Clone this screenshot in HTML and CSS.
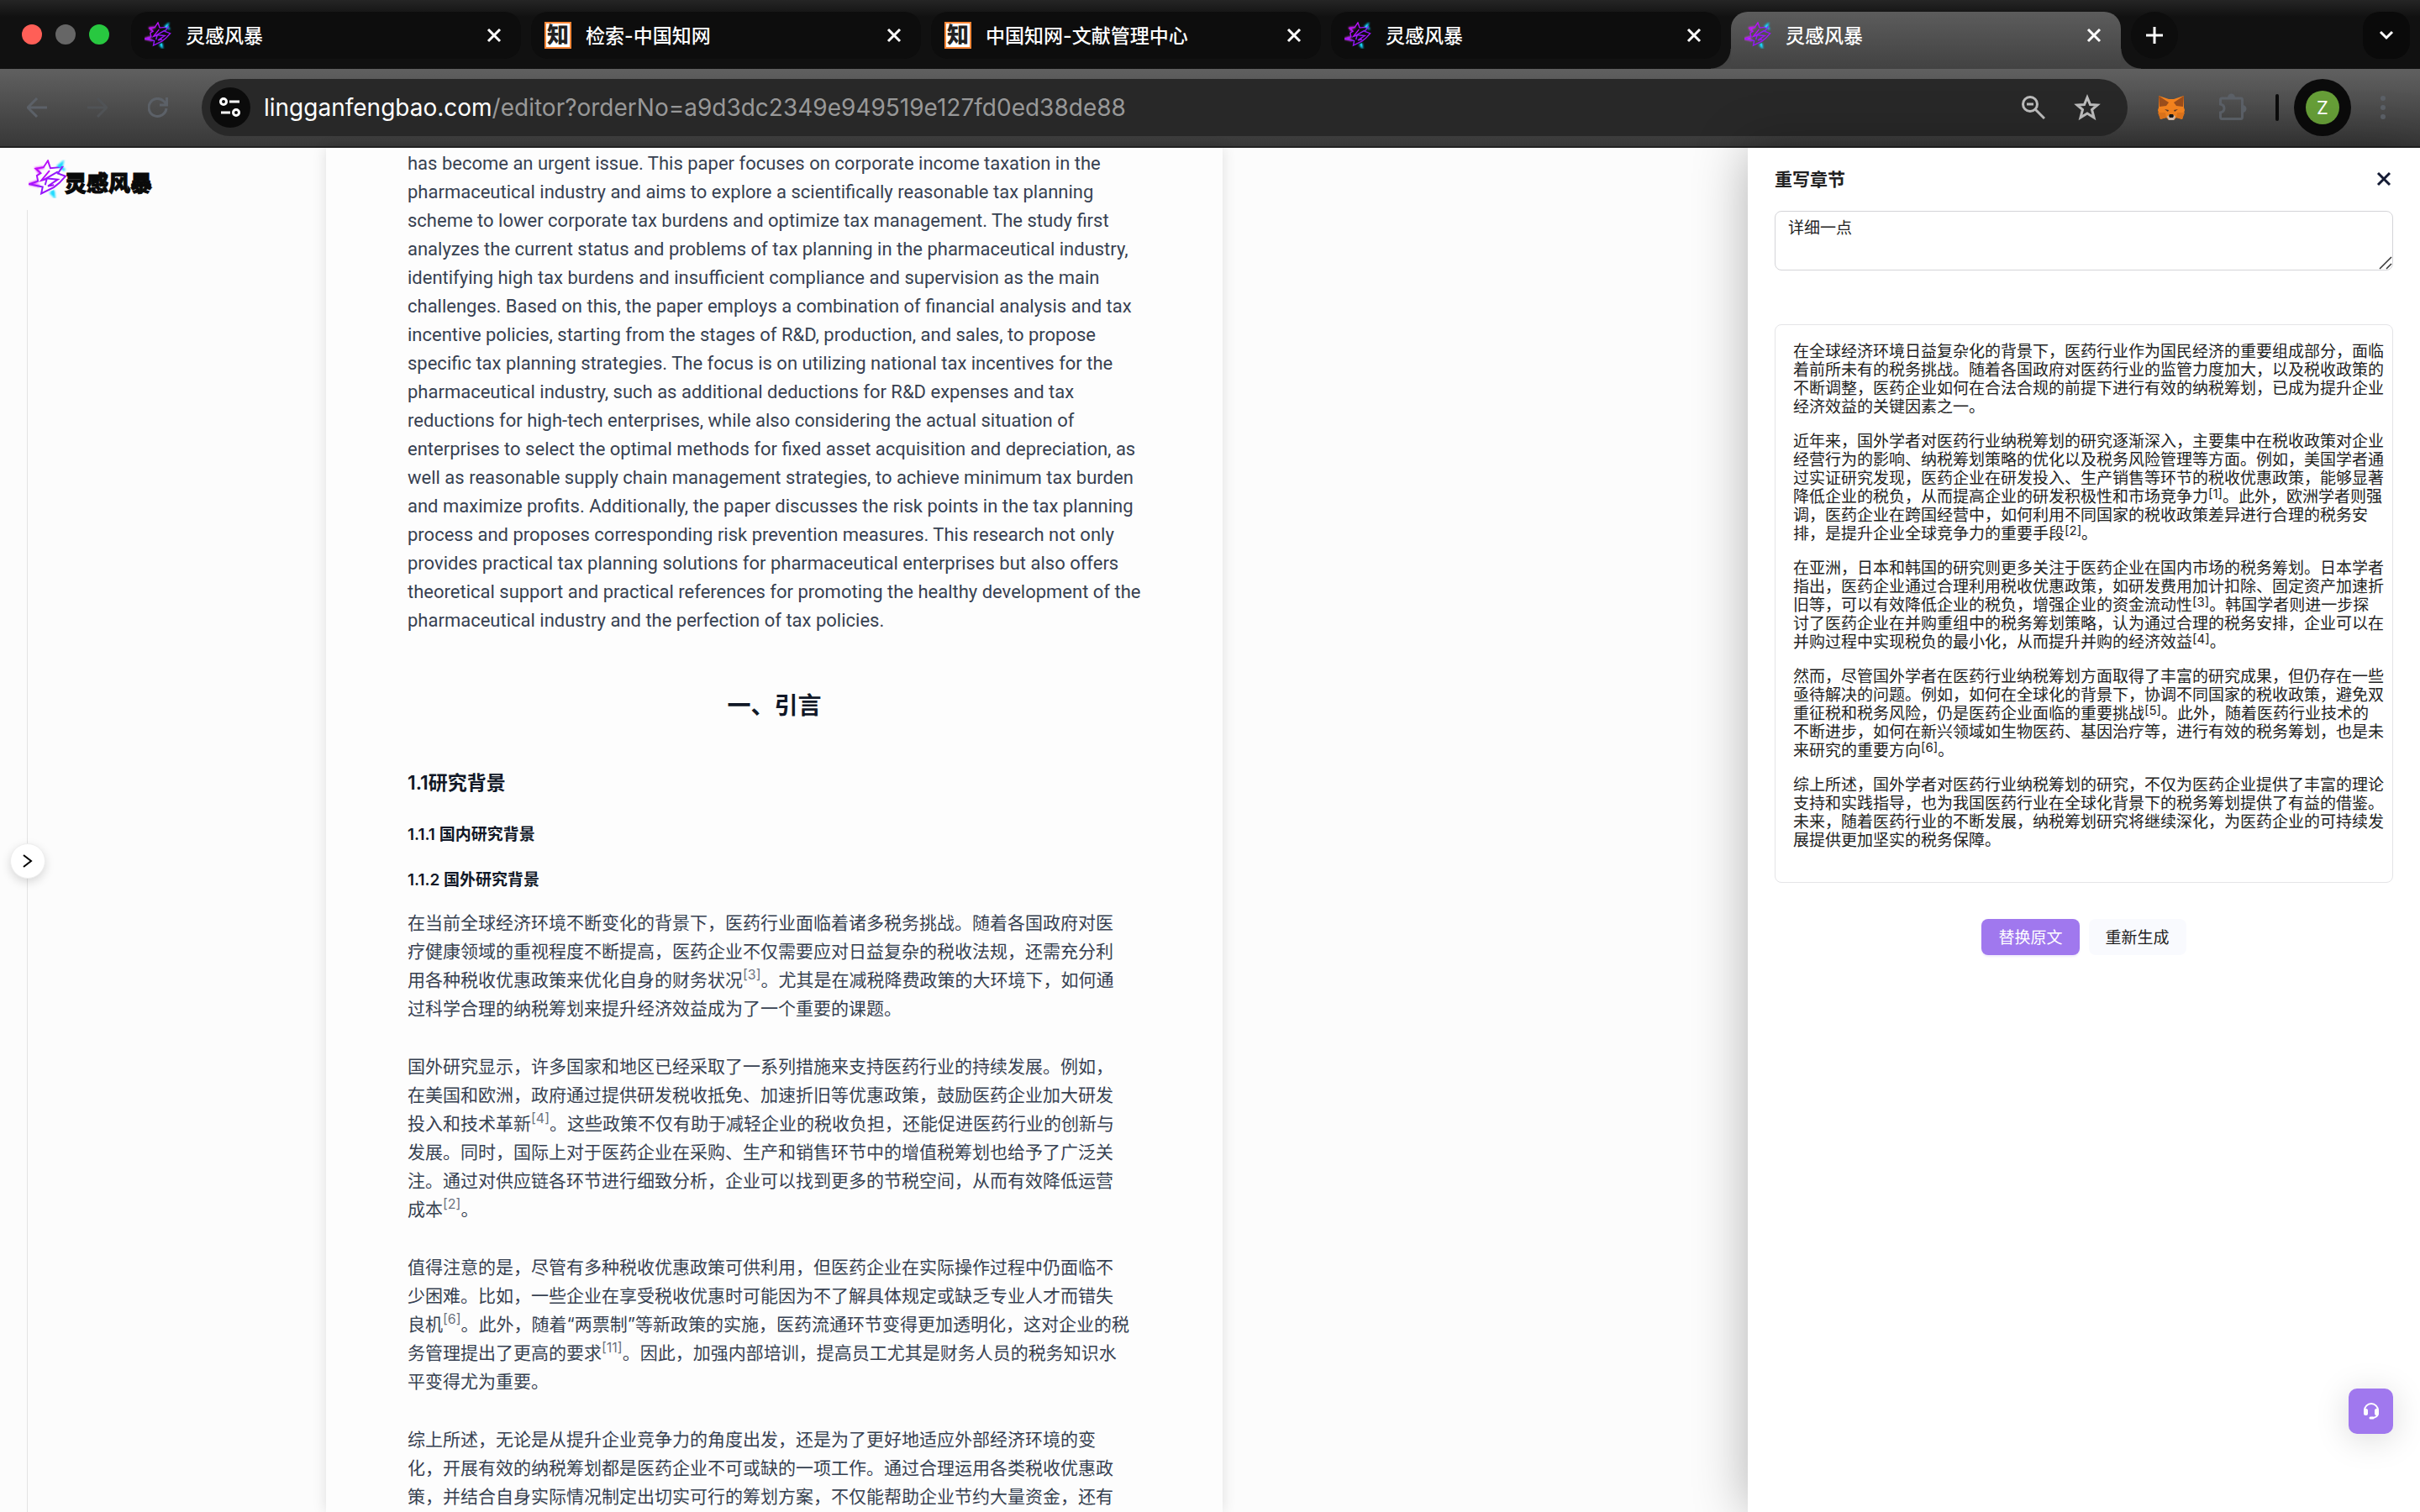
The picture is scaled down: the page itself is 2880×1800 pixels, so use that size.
FILE: index.html
```html
<!DOCTYPE html>
<html lang="zh-CN">
<head>
    <meta charset="UTF-8">
    <meta name="viewport" content="width=device-width, initial-scale=1.0">
    <title>灵感风暴</title>
    <link rel="stylesheet" href="styles.css">
</head>
<body>
    <!-- Shared icons -->
    <svg class="sprite" aria-hidden="true">
        <defs>
            <linearGradient id="neon" x1="0" y1="0" x2="1" y2="1">
                <stop offset="0" stop-color="#e800f5"/>
                <stop offset="0.55" stop-color="#8a1cff"/>
                <stop offset="1" stop-color="#b400f0"/>
            </linearGradient>
            <filter id="glow" x="-40%" y="-40%" width="180%" height="180%">
                <feGaussianBlur stdDeviation="4"/>
            </filter>
        </defs>
        <symbol id="star-logo" viewBox="0 0 140 140">
            <g filter="url(#glow)" fill="none" stroke-width="9">
                <path d="M104 26 L122 12 L118 30 L132 38 M78 118 L92 132 L90 112" stroke="#12dcff"/>
                <path d="M40 50 L28 32 L56 28 M34 78 L4 88 L40 96" stroke="#e23cff"/>
            </g>
            <g fill="none" stroke="url(#neon)" stroke-width="6" stroke-linejoin="miter">
                <path d="M26 33 L54 28 L70 4 L79 31 L122 27 L106 50 L134 60 L112 84 L92 100 L46 123 L51 99 L3 89 L34 78 L30 58 L44 49 Z"/>
                <path d="M76 40 L46 76 L66 70 L60 92 M106 44 L64 68 L106 72 L70 96 L92 92"/>
            </g>
            <path d="M104 26 L120 14 L117 31 Z M80 116 L92 130 L92 110 Z" fill="#20d8ff" opacity="0.8"/>
        </symbol>
        <symbol id="close" viewBox="0 0 18 18">
            <path d="M2 2 L16 16 M16 2 L2 16" fill="none" stroke="currentColor" stroke-width="3"/>
        </symbol>
    </svg>

    <header class="browser">
        <div class="tab-strip">
            <div class="window-dots">
                <span class="dot dot-red"></span>
                <span class="dot dot-gray"></span>
                <span class="dot dot-green"></span>
            </div>
            <div class="tabs">
                <div class="tab">
                    <svg class="favicon"><use href="#star-logo"/></svg>
                    <span class="tab-title">灵感风暴</span>
                    <button class="tab-close" aria-label="关闭"><svg><use href="#close"/></svg></button>
                </div>
                <div class="tab">
                    <span class="favicon-cnki">知</span>
                    <span class="tab-title">检索-中国知网</span>
                    <button class="tab-close" aria-label="关闭"><svg><use href="#close"/></svg></button>
                </div>
                <div class="tab">
                    <span class="favicon-cnki">知</span>
                    <span class="tab-title">中国知网-文献管理中心</span>
                    <button class="tab-close" aria-label="关闭"><svg><use href="#close"/></svg></button>
                </div>
                <div class="tab">
                    <svg class="favicon"><use href="#star-logo"/></svg>
                    <span class="tab-title">灵感风暴</span>
                    <button class="tab-close" aria-label="关闭"><svg><use href="#close"/></svg></button>
                </div>
                <div class="tab tab-active">
                    <svg class="favicon"><use href="#star-logo"/></svg>
                    <span class="tab-title">灵感风暴</span>
                    <button class="tab-close" aria-label="关闭"><svg><use href="#close"/></svg></button>
                </div>
                <button class="tab-new" aria-label="新标签页">
                    <svg width="20" height="20" viewBox="0 0 20 20"><path d="M10 0 V20 M0 10 H20" stroke="#fff" stroke-width="3"/></svg>
                </button>
            </div>
            <button class="tab-search" aria-label="搜索标签页">
                <svg width="18" height="12" viewBox="0 0 18 12"><path d="M2 2 L9 9 L16 2" fill="none" stroke="#fff" stroke-width="3"/></svg>
            </button>
        </div>

        <div class="toolbar">
            <div class="nav-buttons">
                <button aria-label="后退">
                    <svg width="24" height="24" viewBox="0 0 24 24"><path d="M24 12 H2 M12 1 L1 12 L12 23" fill="none" stroke="#5c6168" stroke-width="3"/></svg>
                </button>
                <button aria-label="前进">
                    <svg width="24" height="24" viewBox="0 0 24 24"><path d="M0 12 H22 M12 1 L23 12 L12 23" fill="none" stroke="#505356" stroke-width="3"/></svg>
                </button>
                <button aria-label="刷新">
                    <svg width="24" height="24" viewBox="0 0 24 24"><path d="M22 13 A10.500 10.500 0 1 1 19 4.500 L22 8 M22.500 0 V9 H14" fill="none" stroke="#5c6168" stroke-width="3"/></svg>
                </button>
            </div>
            <div class="address-bar">
                <button class="site-info" aria-label="网站信息">
                    <svg width="26" height="24" viewBox="0 0 26 24" fill="none" stroke="#fff" stroke-width="3"><circle cx="5" cy="5" r="3.500"/><path d="M12 5 H24 M2 18 H13"/><circle cx="20" cy="18" r="3.500"/></svg>
                </button>
                <div class="url"><span class="url-host">lingganfengbao.com</span>/editor?orderNo=a9d3dc2349e949519e127fd0ed38de88</div>
                <button aria-label="缩放">
                    <svg width="28" height="28" viewBox="0 0 28 28" fill="none" stroke="#bdbdbd" stroke-width="3"><circle cx="10" cy="10" r="8.500"/><path d="M6 10 H14 M16 16 L27 27"/></svg>
                </button>
                <button aria-label="收藏">
                    <svg width="32" height="32" viewBox="0 0 32 32"><path d="M16 4 L19.500 12.500 L28 13 L21.500 18.500 L24 28 L16 23 L8 28 L10.500 18.500 L4 13 L12.500 12.500 Z" fill="none" stroke="#bdbdbd" stroke-width="3"/></svg>
                </button>
            </div>
            <div class="extensions">
                <button aria-label="MetaMask">
                    <svg width="32" height="32" viewBox="0 0 32 32">
                        <path d="M1 2 L13 6 H19 L31 2 V16 L32 19 L29 30 L22 28 L19 31 H13 L10 28 L3 30 L0 19 L1 16 Z" fill="#f5841f"/>
                        <path d="M1 2 L13 10 L10 14 L2 15 Z M31 2 L19 10 L22 14 L30 15 Z" fill="#9c4e1c"/>
                        <path d="M0 22 H9 L10 28 L3 30 Z M32 22 H23 L22 28 L29 30 Z" fill="#e2761b"/>
                        <path d="M8 18 L13 19 L12 21 Z M24 18 L19 19 L20 21 Z" fill="#5a3a2a"/>
                        <path d="M11 27 L13 25 H19 L21 27 L19 31 H13 Z" fill="#d7c1b3"/>
                        <path d="M13 26 L14 24 H18 L19 26 L18 28 H14 Z" fill="#161616"/>
                    </svg>
                </button>
                <button aria-label="扩展程序">
                    <svg width="34" height="34" viewBox="0 0 34 34">
                        <path d="M4 6 H27 Q28.500 6 28.500 8 V28 Q28.500 30.500 27 30.500 H4 Q2.500 30.500 2.500 28 V23 Q7 22 7 18 Q7 14 2.500 13 V8 Q2.500 6 4 6 Z" fill="none" stroke="#5c6168" stroke-width="3"/>
                        <path d="M11 5 A4.500 4.500 0 0 1 20 5 Z M29 14 A4.500 4.500 0 0 1 29 23 Z" fill="#5c6168"/>
                    </svg>
                </button>
                <span class="divider"></span>
                <button class="profile" aria-label="个人资料"><span class="avatar">Z</span></button>
                <button aria-label="更多">
                    <svg width="8" height="28" viewBox="0 0 8 28" fill="#5c6168"><circle cx="4" cy="3" r="3"/><circle cx="4" cy="14" r="3"/><circle cx="4" cy="25" r="3"/></svg>
                </button>
            </div>
        </div>
    </header>

    <div class="workspace">
        <aside class="side">
            <a class="logo" href="#">
                <svg class="logo-mark"><use href="#star-logo"/></svg>
                <span class="logo-text">灵感风暴</span>
            </a>
            <div class="rail">
                <button class="rail-toggle" aria-label="展开">
                    <svg width="12" height="18" viewBox="0 0 12 18"><path d="M1 2 L10 9 L1 16" fill="none" stroke="#000" stroke-width="2"/></svg>
                </button>
            </div>
        </aside>

        <main class="canvas">
            <article class="paper">
                <p class="abstract">has become an urgent issue. This paper focuses on corporate income taxation in the<br>
                pharmaceutical industry and aims to explore a scientifically reasonable tax planning<br>
                scheme to lower corporate tax burdens and optimize tax management. The study first<br>
                analyzes the current status and problems of tax planning in the pharmaceutical industry,<br>
                identifying high tax burdens and insufficient compliance and supervision as the main<br>
                challenges. Based on this, the paper employs a combination of financial analysis and tax<br>
                incentive policies, starting from the stages of R&amp;D, production, and sales, to propose<br>
                specific tax planning strategies. The focus is on utilizing national tax incentives for the<br>
                pharmaceutical industry, such as additional deductions for R&amp;D expenses and tax<br>
                reductions for high-tech enterprises, while also considering the actual situation of<br>
                enterprises to select the optimal methods for fixed asset acquisition and depreciation, as<br>
                well as reasonable supply chain management strategies, to achieve minimum tax burden<br>
                and maximize profits. Additionally, the paper discusses the risk points in the tax planning<br>
                process and proposes corresponding risk prevention measures. This research not only<br>
                provides practical tax planning solutions for pharmaceutical enterprises but also offers<br>
                theoretical support and practical references for promoting the healthy development of the<br>
                pharmaceutical industry and the perfection of tax policies.</p>

                <h1>一、引言</h1>
                <h2>1.1研究背景</h2>
                <h3>1.1.1 国内研究背景</h3>
                <h3>1.1.2 国外研究背景</h3>

                <p>在当前全球经济环境不断变化的背景下，医药行业面临着诸多税务挑战。随着各国政府对医<br>
                疗健康领域的重视程度不断提高，医药企业不仅需要应对日益复杂的税收法规，还需充分利<br>
                用各种税收优惠政策来优化自身的财务状况<sup>[3]</sup>。尤其是在减税降费政策的大环境下，如何通<br>
                过科学合理的纳税筹划来提升经济效益成为了一个重要的课题。</p>

                <p>国外研究显示，许多国家和地区已经采取了一系列措施来支持医药行业的持续发展。例如，<br>
                在美国和欧洲，政府通过提供研发税收抵免、加速折旧等优惠政策，鼓励医药企业加大研发<br>
                投入和技术革新<sup>[4]</sup>。这些政策不仅有助于减轻企业的税收负担，还能促进医药行业的创新与<br>
                发展。同时，国际上对于医药企业在采购、生产和销售环节中的增值税筹划也给予了广泛关<br>
                注。通过对供应链各环节进行细致分析，企业可以找到更多的节税空间，从而有效降低运营<br>
                成本<sup>[2]</sup>。</p>

                <p>值得注意的是，尽管有多种税收优惠政策可供利用，但医药企业在实际操作过程中仍面临不<br>
                少困难。比如，一些企业在享受税收优惠时可能因为不了解具体规定或缺乏专业人才而错失<br>
                良机<sup>[6]</sup>。此外，随着“两票制”等新政策的实施，医药流通环节变得更加透明化，这对企业的税<br>
                务管理提出了更高的要求<sup>[11]</sup>。因此，加强内部培训，提高员工尤其是财务人员的税务知识水<br>
                平变得尤为重要。</p>

                <p>综上所述，无论是从提升企业竞争力的角度出发，还是为了更好地适应外部经济环境的变<br>
                化，开展有效的纳税筹划都是医药企业不可或缺的一项工作。通过合理运用各类税收优惠政<br>
                策，并结合自身实际情况制定出切实可行的筹划方案，不仅能帮助企业节约大量资金，还有</p>
            </article>
        </main>

        <section class="drawer">
            <div class="drawer-header">
                <label class="drawer-title" for="prompt">重写章节</label>
                <button class="drawer-close" aria-label="关闭">
                    <svg width="18" height="18" viewBox="0 0 18 18"><path d="M2 2 L16 16 M16 2 L2 16" stroke="#141b34" stroke-width="3"/></svg>
                </button>
            </div>
            <div class="prompt-box">
                <textarea id="prompt" class="prompt">详细一点</textarea>
                <svg class="resizer" width="16" height="16" viewBox="0 0 16 16"><path d="M1 15 L15 1 M9 15 L15 9" stroke="#333" stroke-width="1.500"/></svg>
            </div>
            <div class="result">
                <p>在全球经济环境日益复杂化的背景下，医药行业作为国民经济的重要组成部分，面临<br>
                着前所未有的税务挑战。随着各国政府对医药行业的监管力度加大，以及税收政策的<br>
                不断调整，医药企业如何在合法合规的前提下进行有效的纳税筹划，已成为提升企业<br>
                经济效益的关键因素之一。</p>
                <p>近年来，国外学者对医药行业纳税筹划的研究逐渐深入，主要集中在税收政策对企业<br>
                经营行为的影响、纳税筹划策略的优化以及税务风险管理等方面。例如，美国学者通<br>
                过实证研究发现，医药企业在研发投入、生产销售等环节的税收优惠政策，能够显著<br>
                降低企业的税负，从而提高企业的研发积极性和市场竞争力<sup>[1]</sup>。此外，欧洲学者则强<br>
                调，医药企业在跨国经营中，如何利用不同国家的税收政策差异进行合理的税务安<br>
                排，是提升企业全球竞争力的重要手段<sup>[2]</sup>。</p>
                <p>在亚洲，日本和韩国的研究则更多关注于医药企业在国内市场的税务筹划。日本学者<br>
                指出，医药企业通过合理利用税收优惠政策，如研发费用加计扣除、固定资产加速折<br>
                旧等，可以有效降低企业的税负，增强企业的资金流动性<sup>[3]</sup>。韩国学者则进一步探<br>
                讨了医药企业在并购重组中的税务筹划策略，认为通过合理的税务安排，企业可以在<br>
                并购过程中实现税负的最小化，从而提升并购的经济效益<sup>[4]</sup>。</p>
                <p>然而，尽管国外学者在医药行业纳税筹划方面取得了丰富的研究成果，但仍存在一些<br>
                亟待解决的问题。例如，如何在全球化的背景下，协调不同国家的税收政策，避免双<br>
                重征税和税务风险，仍是医药企业面临的重要挑战<sup>[5]</sup>。此外，随着医药行业技术的<br>
                不断进步，如何在新兴领域如生物医药、基因治疗等，进行有效的税务筹划，也是未<br>
                来研究的重要方向<sup>[6]</sup>。</p>
                <p>综上所述，国外学者对医药行业纳税筹划的研究，不仅为医药企业提供了丰富的理论<br>
                支持和实践指导，也为我国医药行业在全球化背景下的税务筹划提供了有益的借鉴。<br>
                未来，随着医药行业的不断发展，纳税筹划研究将继续深化，为医药企业的可持续发<br>
                展提供更加坚实的税务保障。</p>
            </div>
            <div class="actions">
                <button class="btn btn-primary">替换原文</button>
                <button class="btn">重新生成</button>
            </div>
            <button class="support" aria-label="客服">
                <svg width="20" height="20" viewBox="0 0 20 20" fill="none" stroke="#fff" stroke-width="2">
                    <path d="M2 10 V9 A8 8 0 0 1 18 9 V12 Q18 18 10 18"/>
                    <rect x="2" y="8" width="3" height="6" rx="1" fill="#fff"/>
                    <rect x="15" y="8" width="3" height="6" rx="1" fill="#fff"/>
                    <path d="M9 18 H12" stroke-width="3" stroke-linecap="round"/>
                </svg>
            </button>
        </section>
    </div>
</body>
</html>
```
FILE: styles.css
```css
* {
    box-sizing: border-box;
}
body, html {
    margin: 0;
    padding: 0;
    height: 100%;
    overflow: hidden;
    font-family: Inter, "Noto Sans CJK SC", sans-serif;
    background-color: #fcfcfc;
}
body {
    display: flex;
    flex-direction: column;
}
button {
    display: flex;
    align-items: center;
    justify-content: center;
    flex-shrink: 0;
    padding: 0;
    border: none;
    background: none;
    font-family: inherit;
    cursor: pointer;
}
.sprite {
    position: absolute;
    width: 0;
    height: 0;
}

/* Browser tabs */
.tab-strip {
    display: flex;
    height: 82px;
    padding: 14px 12px 0 26px;
    background: linear-gradient(#252525, #111 20px);
}
.window-dots {
    display: flex;
    gap: 16px;
    width: 130px;
    padding-top: 15px;
}
.dot {
    width: 24px;
    height: 24px;
    border-radius: 50%;
}
.dot-red {
    background-color: #ff5f57;
}
.dot-gray {
    background-color: #666;
}
.dot-green {
    background-color: #28c840;
}
.tabs {
    display: flex;
    flex: 1;
    gap: 12px;
}
.tab {
    display: flex;
    align-items: center;
    flex: 0 1 464px;
    height: 56px;
    padding: 0 23px 0 16px;
    border-radius: 20px;
    background-color: #0d0d0d;
    color: #fff;
}
.tab-active {
    position: relative;
    height: 68px;
    padding-bottom: 12px;
    border-radius: 20px 20px 0 0;
    background: linear-gradient(#5c5c5c, #424242);
}
.tab-active::before,
.tab-active::after {
    content: "";
    position: absolute;
    bottom: 0;
    width: 24px;
    height: 24px;
}
.tab-active::before {
    right: 100%;
    background: radial-gradient(circle at 0 0, transparent 23px, #444 24px);
}
.tab-active::after {
    left: 100%;
    background: radial-gradient(circle at 100% 0, transparent 23px, #444 24px);
}
.favicon {
    width: 32px;
    height: 32px;
}
.favicon-cnki {
    width: 32px;
    height: 32px;
    border: 2px solid #ff8838;
    background-color: #fff;
    color: #222;
    font-size: 26px;
    font-weight: 900;
    line-height: 27px;
    text-align: center;
}
.tab-title {
    flex: 1;
    padding: 0 0 3px 17px;
    font-size: 23px;
    font-weight: 500;
    white-space: nowrap;
}
.tab-close svg {
    width: 18px;
    height: 18px;
    color: #fff;
}
.tab-new {
    width: 56px;
    height: 56px;
    border-radius: 50%;
    background-color: #0d0d0d;
}
.tab-search {
    width: 56px;
    height: 56px;
    border-radius: 20px;
    background-color: #0a0a0a;
}

/* Browser toolbar */
.toolbar {
    display: flex;
    align-items: center;
    height: 94px;
    padding: 0 40px 0 32px;
    border-bottom: 2px solid #222;
    background: linear-gradient(#606060, #383838);
}
.nav-buttons {
    display: flex;
    gap: 48px;
    width: 208px;
}
.address-bar {
    display: flex;
    align-items: center;
    flex: 1;
    gap: 34px;
    height: 68px;
    padding: 0 32px 0 10px;
    border-radius: 34px;
    background-color: #282828;
}
.site-info {
    width: 48px;
    height: 48px;
    margin-right: -18px;
    border-radius: 50%;
    background-color: #0b0b0b;
}
.url {
    flex: 1;
    color: #989898;
    font-size: 28px;
    white-space: nowrap;
}
.url-host {
    color: #fff;
}
.extensions {
    display: flex;
    align-items: center;
    gap: 34px;
    padding-left: 36px;
}
.extensions button:nth-child(2) {
    margin: 0 0 0 6px;
}
.divider {
    width: 4px;
    height: 32px;
    border-radius: 2px;
    background-color: #0b0b0b;
}
.profile {
    width: 68px;
    height: 68px;
    margin-left: -16px;
    border-radius: 50%;
    background-color: #0b0b0b;
}
.avatar {
    width: 40px;
    height: 40px;
    border-radius: 50%;
    background-color: #679f38;
    color: #fff;
    font-size: 22px;
    line-height: 40px;
}

/* Page */
.workspace {
    display: flex;
    flex: 1;
    min-height: 0;
}
.side {
    display: flex;
    flex-direction: column;
    width: 388px;
    flex-shrink: 0;
}
.logo {
    display: flex;
    align-items: center;
    height: 74px;
    padding-left: 34px;
    color: #0a0a0a;
    text-decoration: none;
}
.logo-mark {
    width: 46px;
    height: 46px;
}
.logo-text {
    margin: 6px 0 0 -3px;
    font-size: 26px;
    font-weight: 900;
    -webkit-text-stroke: 1px #0a0a0a;
}
.rail {
    position: relative;
    flex: 1;
    margin-left: 32px;
    border-left: 1px solid #e4e4e4;
}
.rail-toggle {
    position: absolute;
    top: 50%;
    left: -21px;
    width: 42px;
    height: 42px;
    margin-top: -21px;
    border: 1px solid #eee;
    border-radius: 50%;
    background-color: #fff;
    box-shadow: 0 4px 12px rgba(0, 0, 0, 0.15);
}
.canvas {
    flex: 1;
    min-width: 0;
}
.paper {
    max-width: 1067px;
    height: 100%;
    padding: 2px 97px 0;
    overflow: hidden;
    background-color: #fdfdfd;
    box-shadow: 0 0 16px rgba(0, 0, 0, 0.12);
    color: #374151;
    white-space: nowrap;
}
.paper p {
    margin: 0 0 35px;
    font-size: 21px;
    line-height: 34px;
}
.paper .abstract {
    font-family: Roboto, sans-serif;
    font-size: 22px;
}
.paper h1, .paper h2, .paper h3 {
    color: #111827;
    font-weight: 600;
}
.paper h1 {
    margin: 64px 0 56px;
    font-size: 28px;
    line-height: 40px;
    text-align: center;
}
.paper h2 {
    margin: 0 0 32px;
    font-size: 23px;
    line-height: 32px;
}
.paper h3 {
    margin: 26px 0 20px;
    font-size: 19px;
    line-height: 28px;
}
sup {
    font-size: 16px;
    line-height: 0;
}
.paper sup {
    color: #6b7280;
}

/* Rewrite drawer */
.drawer {
    position: relative;
    width: 800px;
    flex-shrink: 0;
    padding: 21px 32px 0;
    background-color: #fff;
    box-shadow: 0 0 60px rgba(0, 0, 0, 0.3);
    color: #222;
    font-size: 19px;
}
.drawer-header {
    display: flex;
    align-items: center;
    justify-content: space-between;
    height: 32px;
    margin-bottom: 22px;
}
.drawer-title {
    padding-bottom: 2px;
    font-size: 21px;
    font-weight: 600;
}
.drawer-close {
    width: 22px;
    height: 32px;
}
.prompt-box {
    position: relative;
    display: flex;
    margin-bottom: 64px;
}
.prompt {
    flex: 1;
    height: 71px;
    padding: 8px 15px;
    border: 1px solid #d4d4d8;
    border-radius: 8px;
    outline: none;
    resize: none;
    color: #222;
    font-family: inherit;
    font-size: 19px;
    line-height: 24px;
}
.resizer {
    position: absolute;
    right: 1px;
    bottom: 1px;
}
.result {
    padding: 21px 0 38px 21px;
    border: 1px solid #e4e4e7;
    border-radius: 8px;
    line-height: 22px;
    white-space: nowrap;
}
.result p {
    margin: 0 0 19px;
}
.result p:last-child {
    margin-bottom: 0;
}
.result sup {
    font-size: 15px;
    vertical-align: 5px;
}
.actions {
    display: flex;
    justify-content: center;
    gap: 11px;
    margin-top: 43px;
}
.btn {
    height: 43px;
    padding: 0 20px 2px;
    border-radius: 8px;
    background-color: #f9fafe;
    color: #222;
    font-size: 19px;
}
.btn-primary {
    background-color: #a078ee;
    box-shadow: 0 2px 2px rgba(160, 120, 238, 0.15);
    color: #fff;
}
.support {
    position: absolute;
    right: 32px;
    bottom: 93px;
    width: 53px;
    height: 54px;
    border-radius: 10px;
    background-color: #a078ee;
    box-shadow: 0 6px 40px rgba(0, 0, 0, 0.15);
}
```
